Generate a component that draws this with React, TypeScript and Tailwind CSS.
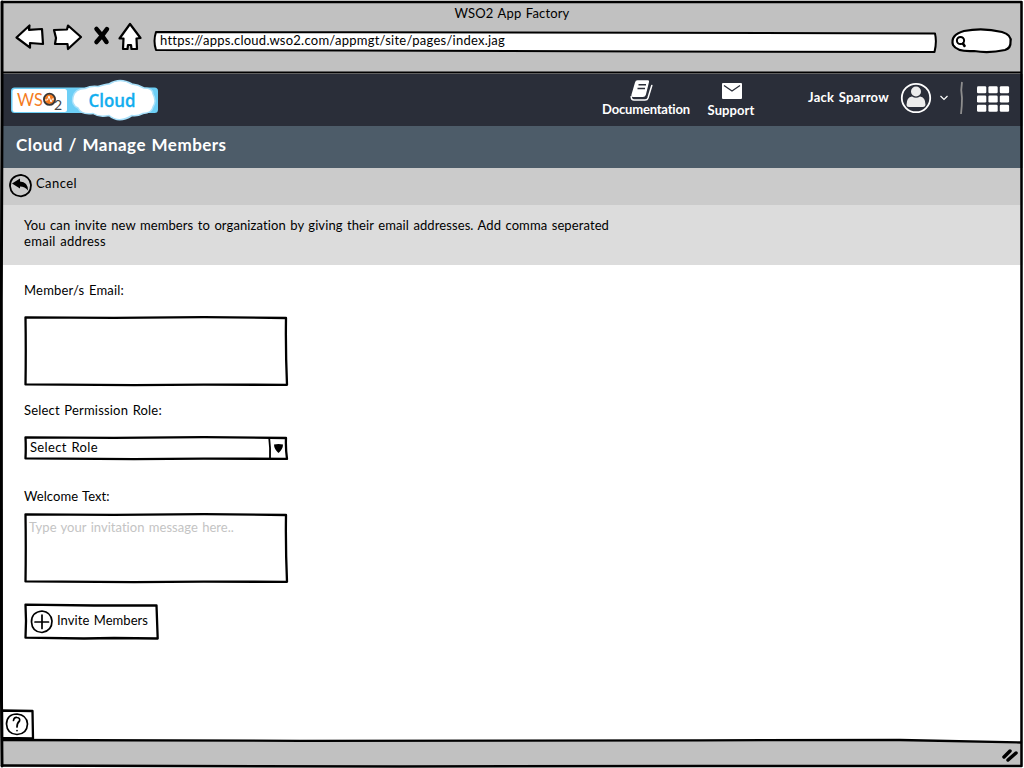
import { type ReactNode } from "react";

const ink = { fill: "none", stroke: "#000", strokeLinecap: "round", strokeLinejoin: "round" } as const;

function Sketch({ w, h, children, className = "" }: { w: number; h: number; children: ReactNode; className?: string }) {
  return (
    <svg width={w} height={h} viewBox={`0 0 ${w} ${h}`} className={`shrink-0 overflow-visible ${className}`}>
      {children}
    </svg>
  );
}

function T({ children, className = "" }: { children: ReactNode; className?: string }) {
  return <span className={`whitespace-nowrap [word-spacing:1px] ${className}`}>{children}</span>;
}

function BrowserBar() {
  return (
    <header className="flex h-[74px] flex-col bg-[#c1c1c1]">
      <div className="flex h-[27px] items-center justify-center pb-0.5">
        <T className="text-[13px] leading-4 tracking-[0.15px]">WSO2 App Factory</T>
      </div>
      <div className="flex h-[30px] items-center">
        <Sketch w={152} h={30}>
          <g {...ink} strokeWidth="2.2" fill="#fff">
            <path d="M16.500 10.500 L29.500 -1.500 L29 2.800 L42 2 L43 17 L30 16 L30 20.700 Z" />
            <path d="M54 3 L67 2.500 L68 -1.500 L81 10 L68 22 L67.500 17 L55 17 L56 11 Z" />
            <path d="M130 -3 L140.500 11 L136.500 11.500 L137 22 L131.500 22 L131 18 L128 18 L127.500 22 L123 22 L123.500 11.500 L119.500 11.500 Z" />
          </g>
          <path {...ink} strokeWidth="4.500" d="M96.500 2 Q102 8 106.500 15 M107 2 Q103 8 96.500 15" />
        </Sketch>
        <div className="relative ml-0.5 flex h-[20px] w-[784px] items-center pb-[5px] pl-1.5">
          <Sketch w={784} h={20} className="absolute left-0 top-0">
            <path {...ink} strokeWidth="2" fill="#fff" d="M2 0 L200 .3 L500 .8 L781 1.500 Q783 10 780.500 20 L500 19.500 L200 18.500 L2 18 Q-1 9 2 0Z" />
          </Sketch>
          <T className="relative text-[13px] leading-4 tracking-[0.25px]">https://apps.cloud.wso2.com/appmgt/site/pages/index.jag</T>
        </div>
        <Sketch w={60} h={25} className="-mt-[3px] ml-[14px]">
          <path {...ink} strokeWidth="2.200" fill="#fff" d="M12 3 Q31 -.5 50 4 Q60 7 58.500 14 Q59 20 53 22 Q37 25.500 22 23 Q5 24 1 17 Q-2 7 12 3Z" />
          <circle cx="8.500" cy="12.500" r="3.600" {...ink} strokeWidth="2" />
          <path {...ink} strokeWidth="2.500" d="M11 15.500 L12.500 18" />
        </Sketch>
      </div>
    </header>
  );
}

function Logo() {
  return (
    <Sketch w={148} h={42}>
      <rect x="0" y="7.500" width="147" height="25.500" rx="3.500" fill="#6dcff6" />
      <rect x="1.500" y="9" width="54.500" height="23" rx="2.500" fill="#fff" />
      <text x="6" y="25.500" fontFamily="Lato" fontSize="17.500" textLength="26" lengthAdjust="spacingAndGlyphs" fill="#f47b20">WS</text>
      <circle cx="38.500" cy="19.300" r="5.600" fill="#f47b20" stroke="#383838" strokeWidth="1.800" />
      <path d="M34 20 L36.500 20 L38 16 L40 22 L41.500 18.800 L43 19.200" fill="none" stroke="#fff" strokeWidth="1" />
      <text x="43" y="29.500" fontFamily="Lato" fontSize="14" fill="#444">2</text>
      <path d="M74 8.500 Q80 5.500 87 6.500 Q96 3.500 98 4 Q109 -3 121 4 Q127 4.500 133 8 Q142 8 142 14 Q146 21 142 27 Q141 33 132 33.500 Q126 36.500 121 35.500 Q108 44 98 35.500 Q88 37.500 82 33.500 Q70 35 67 28 Q60 25 62 17 Q64 8.500 74 8.500Z" fill="#fff" stroke="#a8e0fa" strokeWidth="1.500" />
      <text x="77.500" y="26.500" fontFamily="Open Sans" fontWeight="600" fontSize="17.500" textLength="47" lengthAdjust="spacingAndGlyphs" fill="#12aeef" stroke="#12aeef" strokeWidth=".3">Cloud</text>
    </Sketch>
  );
}

function AppBar() {
  return (
    <div className="flex h-[52px] bg-[#2a2e39] text-white">
      <div className="ml-[11px] mt-[6px] w-[590px]"><Logo /></div>
      <div className="mt-[6px] flex w-[90px] flex-col items-center">
        <Sketch w={24} h={21} className="mr-[9px]">
          <path d="M7.500 .3 H18 Q19.500 .3 19 2 L15.800 15 Q15 17 13 17 H3 Q1 17 1.500 14.500 L5 2.500 Q5.500 .3 7.500 .3Z" fill="#fff" />
          <path d="M1.200 16.500 Q1.200 20 4 20 H15 Q17.300 20 18 18 L21.800 5.500" fill="none" stroke="#fff" strokeWidth="1.500" strokeLinecap="round" />
          <path d="M8.500 4.800 H16 M7.500 8.500 H15" stroke="#2a2e39" strokeWidth="1.400" />
        </Sketch>
        <T className="text-[13px] font-bold leading-4 tracking-[-0.19px]">Documentation</T>
      </div>
      <div className="ml-4 mt-[9px] flex w-12 flex-col items-center">
        <Sketch w={20} h={19} className="ml-0.5">
          <rect width="20" height="16" rx="1" fill="#fff" />
          <path d="M2 2.500 L10 8 L18 2.500" fill="none" stroke="#2a2e39" strokeWidth="1.300" />
        </Sketch>
        <T className="text-[13px] font-bold leading-4 tracking-[0.1px]">Support</T>
      </div>
      <T className="ml-[53px] mt-[15px] w-[93px] text-[13px] font-bold leading-4 tracking-[0.28px]">Jack Sparrow</T>
      <Sketch w={110} h={40} className="mt-2">
        <circle cx="15" cy="16" r="14.200" fill="none" stroke="#fff" strokeWidth="1.800" />
        <circle cx="15" cy="9.500" r="5" fill="#ececec" />
        <path d="M5.500 23 Q5.500 15 11 14.500 Q15 17 19 14.500 Q24.500 15 24.500 23 Q24 25 22 25 H8 Q5.500 25 5.500 23Z" fill="#ececec" />
        <path d="M39.500 14 L43 17.500 L46.500 14" fill="none" stroke="#fff" strokeWidth="1.200" />
        <path d="M61 0 Q59.500 8 61 16 Q61 24 60 32" fill="none" stroke="#8e8e8e" strokeWidth="1.800" />
        <g fill="#fff">
          {[0, 1, 2].map((r) => [0, 1, 2].map((c) => (
            <rect key={`${r}${c}`} x={76 + c * 11.400} y={4.300 + r * 9.200} width="9.300" height="7" rx="1.300" />
          )))}
        </g>
      </Sketch>
    </div>
  );
}

function Box({ children, h, className = "" }: { children?: ReactNode; h: number; className?: string }) {
  return (
    <div className={`relative w-[264px] ${className}`}>
      <Sketch w={264} h={h} className="absolute left-0 top-0">
        <path {...ink} strokeWidth="2.300" d={`M1.500 1.300 L90 1.800 L180 1.200 L262 2 Q261.500 ${h / 2} 263 ${h - 1.200} L180 ${h - 1.300} L110 ${h - .8} L1.500 ${h - 1.600} Q2 ${h / 2} 1.500 1.300Z`} />
      </Sketch>
      {children}
    </div>
  );
}

export default function App() {
  return (
    <div className="relative flex h-[768px] w-[1024px] flex-col overflow-hidden bg-white font-['Lato',sans-serif] text-black">
      <BrowserBar />
      <AppBar />
      <div className="flex h-[42px] items-center bg-[#4d5c69] pb-1 pl-4 text-white">
        <T className="text-[17px] font-bold leading-5 tracking-[0.48px]">Cloud / Manage Members</T>
      </div>
      <div className="flex h-[37px] items-center bg-[#cbcbcb] pb-[3px] pl-[9px]">
        <Sketch w={23} h={23} className="mr-1">
          <path {...ink} strokeWidth="1.800" d="M12 .8 Q21 2 22 11 Q22 21 12 22.300 Q2 22 1 12 Q1 2 12 .8Z" />
          <path d="M3 9.500 L11 4.500 L11 7.500 Q19 8 19 16.500 Q16 12.500 11 12.500 L11 14.500Z" fill="#000" />
        </Sketch>
        <T className="pb-[5px] text-[13px] leading-4 tracking-[0.43px]">Cancel</T>
      </div>
      <div className="flex h-[60px] flex-col bg-[#dcdcdc] pl-6 pt-3 text-[13px] leading-4">
        <T className="tracking-[0.097px]">You can invite new members to organization by giving their email addresses. Add comma seperated</T>
        <T className="tracking-[0.29px]">email address</T>
      </div>
      <main className="flex h-[475px] flex-col items-start pl-6 pt-[17px] text-[13px] leading-4">
        <T className="tracking-[0.2px]">Member/s Email:</T>
        <Box h={70} className="mt-[18px] h-[69px]" />
        <T className="mt-[17px] tracking-[0.19px]">Select Permission Role:</T>
        <Box h={24} className="mt-[18px] h-6 pl-1.5 pt-[3px]">
          <div className="flex"><T className="tracking-[0.36px]">Select Role</T></div>
          <Sketch w={20} h={24} className="absolute right-0 top-0">
            <path {...ink} strokeWidth="1.800" d="M1.200 2 Q2.500 12 2 22" />
            <path d="M6 8.500 Q10.500 7.500 15 8.500 Q15 13 10.500 17 Q6 13 6 8.500Z" />
          </Sketch>
        </Box>
        <T className="mt-7 tracking-[0.06px]">Welcome Text:</T>
        <Box h={70} className="mt-[9px] h-[69px] pl-[5px] pt-[6px] text-[#c4c4c4]"><div className="flex"><T className="tracking-[0.03px]">Type your invitation message here..</T></div></Box>
        <button className="relative mt-[21px] flex h-[37px] w-[135px] items-center pl-1.5">
          <Sketch w={135} h={37} className="absolute left-0 top-0">
            <path {...ink} strokeWidth="2.300" d="M1.500 1.700 L70 2.500 L132.500 2.300 L133.700 35.500 L90 35 L60 35.500 L1.500 34.700 Q2.500 17 1.500 1.700Z" />
          </Sketch>
          <Sketch w={23} h={23} className="mr-1">
            <path {...ink} strokeWidth="1.700" d="M12 1 Q21 2 22 11 Q22 21 12 22.500 Q2 22 1.500 12 Q1.500 2 12 1Z M12 5 V18.500 M5 12 H18.500" />
          </Sketch>
          <T className="pb-[3px] tracking-[0.06px]">Invite Members</T>
        </button>
      </main>
      <footer className="h-[28px] bg-[#c1c1c1]" />
      <Sketch w={1024} h={768} className="pointer-events-none absolute left-0 top-0">
        <path d="M0 0 H2 V768 H0Z M1022.500 0 H1024 V768 H1022.500Z M0 767 H1024 V768 H0Z M0 0 H1024 V1 H0Z" fill="#fff" />
        <path d="M2 710.500 L32.500 711 L33 738.500 L2 738Z" {...ink} fill="#fff" strokeWidth="2.300" />
        <path d="M17 714 Q27 715 27.500 724 Q27 734 17 734.500 Q7 734 6.500 724 Q7 714 17 714Z M13.500 720.500 Q14 717 17 717.500 Q20.500 718 19.500 721 Q17 723 17 727 M17 730.500 V730.600" {...ink} strokeWidth="1.700" />
        <path d="M850 739 L1020 742 V739Z" fill="#fff" />
        <path d="M2 740 L300 740.800 L700 740.300 L900 740 L1021 742.500" {...ink} strokeWidth="2.300" />
        <path d="M3 72.500 H1021" {...ink} strokeWidth="2.200" />
        <path d="M2 2 H1021.500 L1021.500 766 L700 766 L400 766.500 L2 765.500" {...ink} strokeWidth="2.500" />
        <path d="M2 2 L2 110 L1.300 300 L1.500 700 L2 766" {...ink} strokeWidth="3" />
        <path d="M1004 757 L1010 751 M1008 760 L1016 753" {...ink} strokeWidth="3.500" />
      </Sketch>
    </div>
  );
}
